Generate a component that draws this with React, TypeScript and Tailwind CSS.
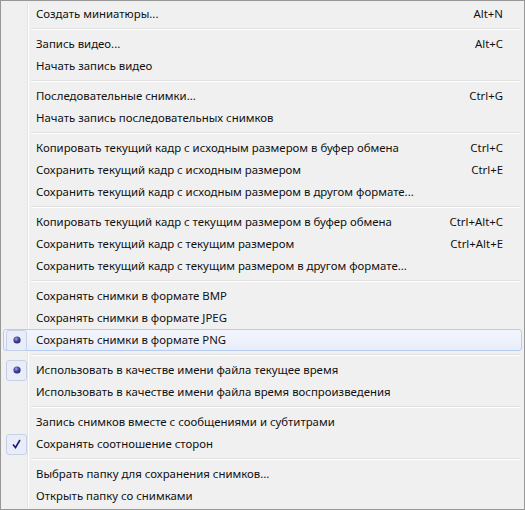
import React from "react";

type Item =
  | { sep: true }
  | { sep?: false; label: string; shortcut?: string; mark?: "radio" | "check"; hover?: boolean };

const items: Item[] = [
  { label: "Создать миниатюры...", shortcut: "Alt+N" },
  { sep: true },
  { label: "Запись видео...", shortcut: "Alt+C" },
  { label: "Начать запись видео" },
  { sep: true },
  { label: "Последовательные снимки...", shortcut: "Ctrl+G" },
  { label: "Начать запись последовательных снимков" },
  { sep: true },
  { label: "Копировать текущий кадр с исходным размером в буфер обмена", shortcut: "Ctrl+C" },
  { label: "Сохранить текущий кадр с исходным размером", shortcut: "Ctrl+E" },
  { label: "Сохранить текущий кадр с исходным размером в другом формате..." },
  { sep: true },
  { label: "Копировать текущий кадр с текущим размером в буфер обмена", shortcut: "Ctrl+Alt+C" },
  { label: "Сохранить текущий кадр с текущим размером", shortcut: "Ctrl+Alt+E" },
  { label: "Сохранить текущий кадр с текущим размером в другом формате..." },
  { sep: true },
  { label: "Сохранять снимки в формате BMP" },
  { label: "Сохранять снимки в формате JPEG" },
  { label: "Сохранять снимки в формате PNG", mark: "radio", hover: true },
  { sep: true },
  { label: "Использовать в качестве имени файла текущее время", mark: "radio" },
  { label: "Использовать в качестве имени файла время воспроизведения" },
  { sep: true },
  { label: "Запись снимков вместе с сообщениями и субтитрами" },
  { label: "Сохранять соотношение сторон", mark: "check" },
  { sep: true },
  { label: "Выбрать папку для сохранения снимков..." },
  { label: "Открыть папку со снимками" },
];

function Mark({ kind }: { kind: "radio" | "check" }) {
  return (
    <div className="ml-[2px] flex h-[21px] w-[21px] items-center justify-center rounded-[3px] border border-[#c6d0e6] bg-[#e9edf7]">
      {kind === "radio" ? (
        <svg width="8" height="8" viewBox="0 0 8 8">
          <defs>
            <radialGradient id="ball" cx="0.4" cy="0.35" r="0.65">
              <stop offset="0" stopColor="#a0a0e4" />
              <stop offset="0.5" stopColor="#4a4aa0" />
              <stop offset="1" stopColor="#24246a" />
            </radialGradient>
          </defs>
          <circle cx="4" cy="4" r="3.6" fill="url(#ball)" />
        </svg>
      ) : (
        <svg width="9" height="10" viewBox="0 0 9 10">
          <path d="M1 5.5 L3.5 8.5 L8 1" fill="none" stroke="#1c1c78" strokeWidth="1.6" />
        </svg>
      )}
    </div>
  );
}

export default function App() {
  return (
    <div
      className="relative h-[510px] w-[525px] border border-[#979797] bg-[#f0f0f0] p-[2px] text-[11.4px] text-[#111]"
      style={{ fontFamily: "'Noto Sans', 'Open Sans', sans-serif" }}
    >
      {/* gutter line */}
      <div className="absolute top-[2px] bottom-[2px] left-[26px] w-[2px] border-l border-[#e2e3e3] bg-white" />
      <div className="relative flex flex-col">
        {items.map((it, i) =>
          it.sep ? (
            <div key={i} className="flex h-[8px] flex-col justify-center pl-[28px] pr-[2px]">
              <div className="h-px bg-[#e0e0e0]" />
              <div className="h-px bg-white" />
            </div>
          ) : (
            <div
              key={i}
              className={
                it.hover
                  ? "flex h-[22px] items-center rounded-[3px] border border-[#b4cdf0] bg-gradient-to-b from-[#f4f6fd] to-[#e8edf9]"
                  : "flex h-[22px] items-center border border-transparent"
              }
            >
              <div className="flex w-[32px] shrink-0 items-center">
                {it.mark && <Mark kind={it.mark} />}
              </div>
              <span className="flex-1 whitespace-nowrap">{it.label}</span>
              {it.shortcut && <span className="pr-[18px] whitespace-nowrap">{it.shortcut}</span>}
            </div>
          )
        )}
      </div>
    </div>
  );
}
